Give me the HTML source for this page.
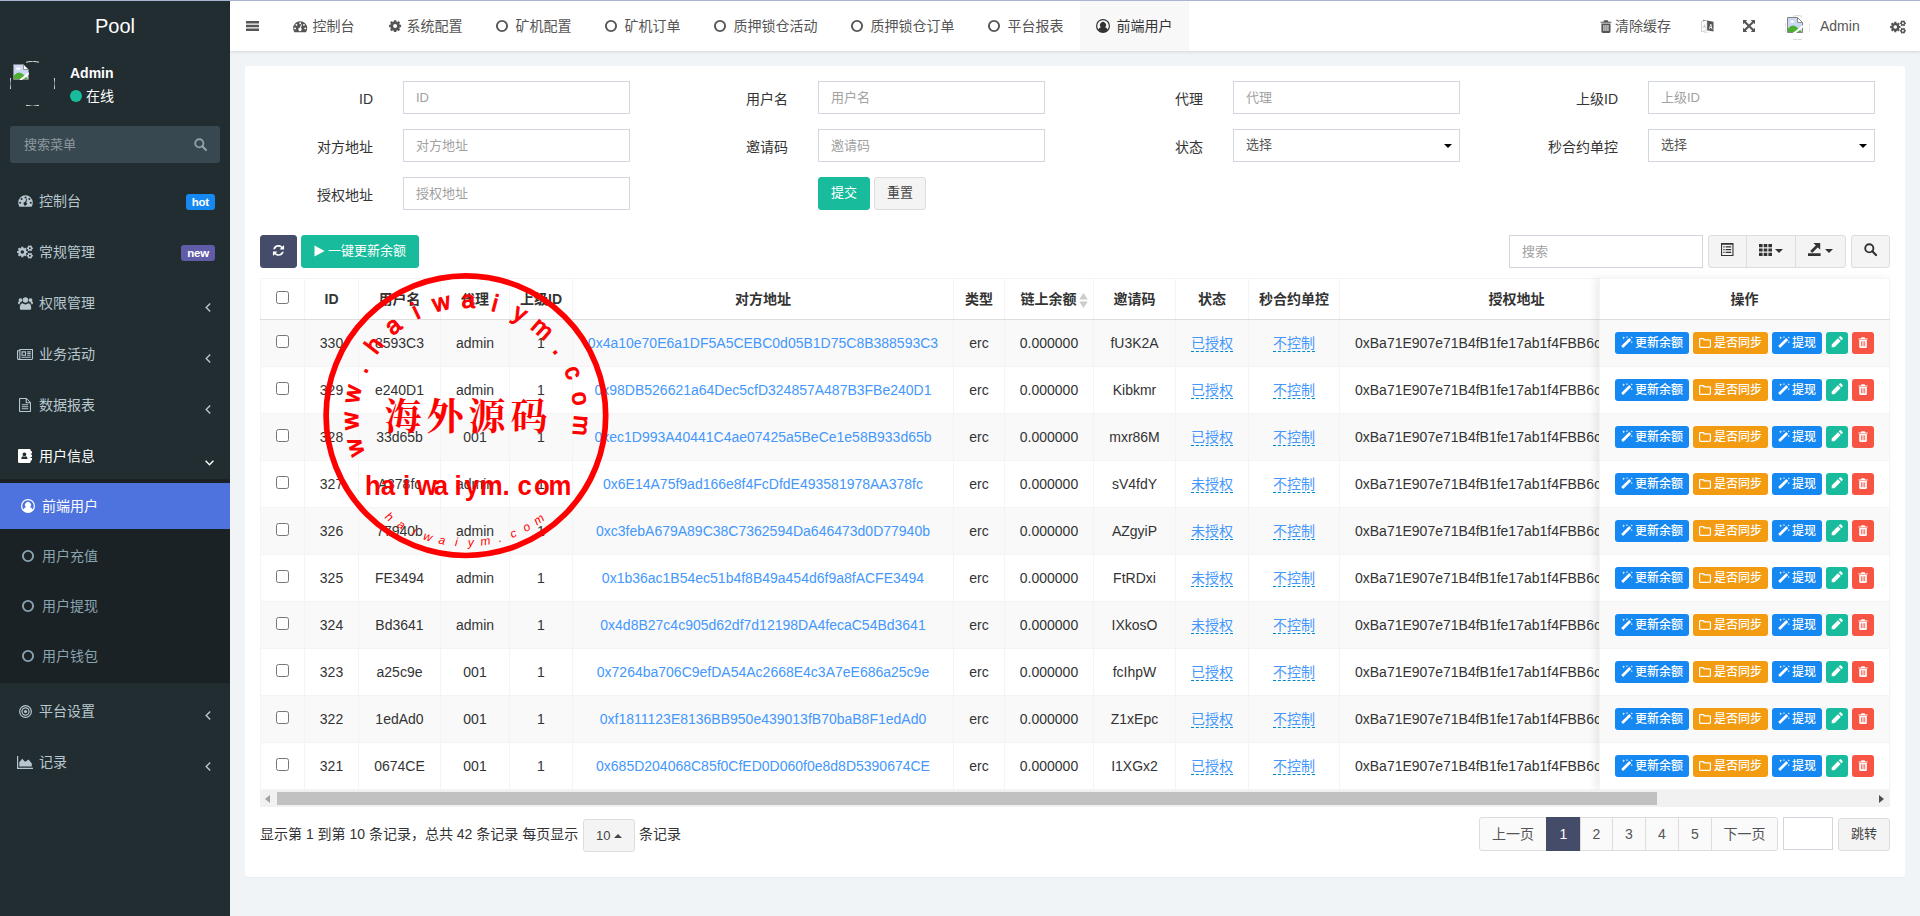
<!DOCTYPE html>
<html lang="zh-CN"><head><meta charset="utf-8"><title>Pool</title>
<style>
*{box-sizing:border-box;}
html,body{margin:0;padding:0;}
body{width:1920px;height:916px;overflow:hidden;background:#f1f4f6;font-family:"Liberation Sans","Noto Sans CJK SC",sans-serif;font-size:14px;line-height:20px;color:#333;position:relative;}
svg.ic{display:inline-block;vertical-align:middle;overflow:visible;}
a{text-decoration:none;color:inherit;}
.topline{position:absolute;left:0;top:0;width:1920px;height:1px;background:#a9b4d2;z-index:50;}
/* sidebar */
.sidebar{position:absolute;left:0;top:0;width:230px;height:916px;background:#222d32;color:#b8c7ce;}
.logo{position:absolute;left:0;top:1px;width:230px;height:50px;line-height:50px;text-align:center;color:#fff;font-size:20px;}
.upanel{position:absolute;left:0;top:51px;width:230px;height:65px;}
.avatar{position:absolute;left:10px;top:10px;width:45px;height:45px;}
.uname{position:absolute;left:70px;top:12px;color:#fff;font-weight:bold;font-size:14px;line-height:20px;}
.ustat{position:absolute;left:70px;top:35px;color:#fff;font-size:14px;line-height:20px;}
.ustat i{display:inline-block;width:12px;height:12px;border-radius:50%;background:#18bc9c;vertical-align:-1px;margin-right:4px;}
.sform{position:absolute;left:10px;top:126px;width:210px;height:37px;border-radius:3px;background:#374850;color:#8d989e;font-size:13px;line-height:37px;padding-left:14px;}
.sform svg{position:absolute;left:184px;top:12px;color:#93a0a6;}
ul.menu{position:absolute;left:0;top:173px;width:230px;margin:0;padding:0;list-style:none;}
ul.menu>li{margin:5px 0 0 0;padding:0;position:relative;}
ul.menu>li>a{display:block;height:46px;padding:13px 5px 13px 15px;line-height:20px;color:#b8c7ce;position:relative;white-space:nowrap;}
ul.menu>li>a .mi{display:inline-block;width:24px;text-align:center;margin-left:0;height:20px;line-height:18px;vertical-align:top;position:relative;left:-2px;}
ul.menu>li.open>a{color:#fff;}
.badge{position:absolute;right:15px;top:16px;height:16px;line-height:16px;border-radius:3px;color:#fff;font-weight:bold;font-size:11.5px;padding:0 6px;letter-spacing:-0.2px;}
.chev{position:absolute;right:19px;top:23px;line-height:0;}
ul.sub{list-style:none;margin:0;padding:4px 0 4px 0;background:#1a2226;}
ul.sub li{margin:0;padding:0;}
ul.sub li+li{margin-top:4px;}
ul.sub li a{display:block;height:46px;padding:13px 5px 13px 21px;line-height:20px;color:#8aa4af;white-space:nowrap;}
ul.sub li a .mi{display:inline-block;width:21px;height:20px;line-height:18px;vertical-align:top;}
ul.sub li.act a{background:#4e73df;color:#fff;}
/* header */
.header{position:absolute;left:230px;top:1px;width:1690px;height:50px;background:#fff;box-shadow:0 1px 3px rgba(0,0,0,.12);color:#555;}
.hamb{position:absolute;left:16px;top:20px;line-height:0;color:#555;}
.tabs{position:absolute;left:46.500px;top:0;height:50px;white-space:nowrap;}
.tab{display:inline-block;height:50px;line-height:50px;padding:0 16px;color:#555;vertical-align:top;}
.tab .ti{display:inline-block;width:20px;text-align:left;line-height:0;vertical-align:middle;position:relative;top:-1px;}
.tab.act{background:#f8f8f9;color:#333;}
.hr{position:absolute;top:0;height:50px;line-height:50px;color:#555;white-space:nowrap;}
/* content */
.panel{position:absolute;left:245px;top:66px;width:1660px;height:811px;background:#fff;border-radius:3px;box-shadow:0 1px 1px rgba(0,0,0,.03);}
.fg{position:absolute;height:33px;}
.fg label{position:absolute;right:100%;margin-right:30px;top:8px;line-height:20px;white-space:nowrap;color:#333;font-weight:normal;}
.fg .inp{position:absolute;left:0;top:0;width:227px;height:33px;border:1px solid #d2d6de;background:#fff;padding:5px 12px;line-height:21px;color:#a2a2a2;font-size:13px;}
.fg .sel{color:#555;line-height:19px;}
.fg .sel svg{position:absolute;right:7px;top:14px;color:#000;}
.btn{position:absolute;height:33px;line-height:30px;border:1px solid transparent;border-radius:3px;text-align:center;font-size:13px;white-space:nowrap;}
.b-suc{background:#18bc9c;border-color:#18bc9c;color:#fff;}
.b-def{background:#f4f4f4;border-color:#ddd;color:#444;}
.b-pri{background:#444c69;border-color:#444c69;color:#fff;}
/* table */
.twrap{position:absolute;left:260px;top:278px;width:1630px;height:512px;overflow:hidden;}
table{border-collapse:collapse;table-layout:fixed;font-size:14px;}
table.main{width:1920px;}
th,td{border:1px solid #f4f4f4;text-align:center;padding:0 8px;white-space:nowrap;overflow:hidden;vertical-align:middle;}
th{height:41px;font-weight:bold;color:#333;border-bottom:1px solid #ddd;background:#fff;}
td{height:47px;color:#333;}
tr.odd td{background:#f9f9f9;}
tr.even td{background:#fff;}
td a.lnk{color:#4397fd;}
td a.ed{color:#4397fd;border-bottom:1px dashed #08c;padding-bottom:0px;line-height:16px;display:inline-block;}
.cb{display:inline-block;width:13px;height:13px;border:1px solid #767676;border-radius:2.5px;background:#fff;vertical-align:middle;position:relative;top:-3px;}
.fixr{position:absolute;left:1599px;top:278px;width:291px;height:512px;background:#fff;box-shadow:-4px 0 8px rgba(0,0,0,.075);overflow:hidden;}
.fixr table{width:291px;}
.xb{display:inline-block;height:22px;line-height:20px;border:1px solid transparent;border-radius:3px;color:#fff;font-size:12px;font-weight:500;padding:0 5px;vertical-align:middle;margin-right:4px;white-space:nowrap;}
.xb svg{vertical-align:-1px;margin-right:2px;}
.xb.x-warn svg{margin-right:3px;}
.xb.ico{padding:0;width:22px;text-align:center;}
.xb.ico svg{margin:0;}
.x-info{background:#1688f1;}
.x-warn{background:#f39c12;}
.x-suc{background:#18bc9c;}
.x-dan{background:#f75444;}
.sbar{position:absolute;left:260px;top:790px;width:1630px;height:17px;background:#f1f1f1;}
.sbar .thumb{position:absolute;left:17px;top:2px;width:1380px;height:13px;background:#c1c1c1;}
.pinfo{position:absolute;left:260px;top:824px;line-height:20px;color:#333;white-space:nowrap;}
.pg{position:absolute;top:817px;height:34px;line-height:32px;border:1px solid #ddd;background:#fafafa;color:#555;text-align:center;}
</style></head>
<body>
<div class="sidebar">
<div class="logo">Pool</div>
<div class="upanel"><div class="avatar"><svg width="45" height="45" viewBox="0 0 45 45" style="position:absolute;left:0;top:0"><g fill="none" stroke="#d8dcde" stroke-width="1"><path d="M16 1.200a22 22 0 0 1 13 0"/><path d="M16 44.300a22 22 0 0 0 13 0"/><path d="M0.600 17a22 22 0 0 0 0 11"/><path d="M44.400 17a22 22 0 0 1 0 11"/></g></svg><span style="position:absolute;left:2.500px;top:3px;line-height:0"><svg class="ic" width="16" height="16" viewBox="0 0 16 16" style=""><path fill="#c9d7f2" d="M1 1h9.500l4.500 4.500v9.500h-14z"/><ellipse cx="5.300" cy="4.600" rx="2.300" ry="1.200" fill="#fff"/><path fill="#4caf2f" d="M1 15v-3.500q3.500-4.300 7-2.500q3.500 1.800 7 6z"/><path fill="#fff" d="M5.800 16L16 7.800v2.700L9.300 16z"/><path fill="none" stroke="#858585" stroke-width="1" d="M6.300 15.500h-5.800v-15h10l5 5v3M15.500 10.800v4.700h-5.800"/><path fill="#fff" stroke="#858585" stroke-width="0.900" d="M10.500 0.500v5h5z"/></svg></span></div><div class="uname">Admin</div><div class="ustat"><i></i>在线</div></div>
<div class="sform">搜索菜单<svg class="ic" width="13" height="13" viewBox="0 0 13 13" style=""><circle cx="5.3" cy="5.300" r="4.100" fill="none" stroke="currentColor" stroke-width="1.900"/><path d="M8.300 8.300L12 12" stroke="currentColor" stroke-width="2.200" stroke-linecap="round"/></svg></div>
<ul class="menu">
<li class=""><a><span class="mi"><svg class="ic" width="15" height="12.0" viewBox="0 0 15 12" style=""><path fill="currentColor" fill-rule="evenodd" d="M7.5 0.3A7.3 7.3 0 0 0 0.2 7.6c0 1.4 0.4 2.8 1.1 3.9c0.1 0.2 0.3 0.3 0.5 0.3h11.4c0.2 0 0.4-0.1 0.5-0.3a7.3 7.3 0 0 0 1.100-3.900A7.3 7.3 0 0 0 7.500 0.300zM7.5 1.400a1 1 0 1 1 0 2a1 1 0 0 1 0-2zM3.600 3a1 1 0 1 1 0 2a1 1 0 0 1 0-2zM11.400 3a1 1 0 1 1 0 2a1 1 0 0 1 0-2zM2.200 6.700a1 1 0 1 1 0 2a1 1 0 0 1 0-2zM12.800 6.700a1 1 0 1 1 0 2a1 1 0 0 1 0-2zM8.600 3.400l0.700 0.200l-1 3.800a1.700 1.700 0 1 1-1.200-0.300z"/></svg></span>控制台<span class="badge" style="background:#1688f1">hot</span></a></li>
<li class=""><a><span class="mi"><svg class="ic" width="16" height="14.0" viewBox="0 0 16 14" style=""><path fill="currentColor" fill-rule="evenodd" d="M9.25 5.92L10.49 5.93L10.49 8.07L9.25 8.08L8.86 9.03L9.73 9.91L8.21 11.43L7.33 10.56L6.38 10.95L6.37 12.19L4.23 12.19L4.22 10.95L3.27 10.56L2.39 11.43L0.87 9.91L1.74 9.03L1.35 8.08L0.11 8.07L0.11 5.93L1.35 5.92L1.74 4.97L0.87 4.09L2.39 2.57L3.27 3.44L4.22 3.05L4.23 1.81L6.37 1.81L6.38 3.05L7.33 3.44L8.21 2.57L9.73 4.09L8.86 4.97ZM3.50 7.00a1.80 1.80 0 1 0 3.60 0a1.80 1.80 0 1 0 -3.60 0z M15.06 2.50L15.89 2.47L15.89 4.13L15.06 4.10L14.67 4.77L15.11 5.47L13.67 6.30L13.28 5.57L12.52 5.57L12.13 6.30L10.69 5.47L11.13 4.77L10.74 4.10L9.91 4.13L9.91 2.47L10.74 2.50L11.13 1.83L10.69 1.13L12.13 0.30L12.52 1.03L13.28 1.03L13.67 0.30L15.11 1.13L14.67 1.83ZM11.90 3.30a1.00 1.00 0 1 0 2.00 0a1.00 1.00 0 1 0 -2.00 0z M15.06 9.90L15.89 9.87L15.89 11.53L15.06 11.50L14.67 12.17L15.11 12.87L13.67 13.70L13.28 12.97L12.52 12.97L12.13 13.70L10.69 12.87L11.13 12.17L10.74 11.50L9.91 11.53L9.91 9.87L10.74 9.90L11.13 9.23L10.69 8.53L12.13 7.70L12.52 8.43L13.28 8.43L13.67 7.70L15.11 8.53L14.67 9.23ZM11.90 10.70a1.00 1.00 0 1 0 2.00 0a1.00 1.00 0 1 0 -2.00 0z"/></svg></span>常规管理<span class="badge" style="background:#605ca8">new</span></a></li>
<li class=""><a><span class="mi"><svg class="ic" width="15" height="13" viewBox="0 0 15 13" style=""><path fill="currentColor" d="M7.500 0.300a2.700 2.700 0 1 1 0 5.400a2.700 2.700 0 0 1 0-5.400zM2.500 1.200a1.900 1.900 0 1 1 0 3.800a1.900 1.900 0 0 1 0-3.800zM12.500 1.200a1.900 1.900 0 1 1 0 3.800a1.900 1.900 0 0 1 0-3.800zM3.300 12.800c-0.900 0-1.500-0.500-1.500-1.400c0-2.800 0.900-5.100 2.600-5.100c0.400 0 1.500 1.200 3.100 1.200s2.700-1.200 3.100-1.200c1.700 0 2.600 2.300 2.600 5.100c0 0.900-0.600 1.400-1.500 1.400zM1.400 7.400c-1-0.100-1.400-0.500-1.400-1.300c0-0.700 0.200-1.600 0.900-1.600c0.200 0 0.800 0.600 1.600 0.600c0.400 0 0.800-0.100 1.100-0.300c-1.200 0.300-1.900 1.200-2.200 2.600zM13.600 7.400c1-0.100 1.400-0.500 1.400-1.300c0-0.700-0.200-1.600-0.900-1.600c-0.200 0-0.800 0.600-1.600 0.600c-0.400 0-0.800-0.100-1.100-0.300c1.200 0.300 1.900 1.200 2.200 2.600z"/></svg></span>权限管理<span class="chev"><svg class="ic" width="6" height="9" viewBox="0 0 6 9" style=""><path fill="none" stroke="currentColor" stroke-width="1.4" d="M5.200 0.600L1.200 4.500L5.200 8.400"/></svg></span></a></li>
<li class=""><a><span class="mi"><svg class="ic" width="16" height="11" viewBox="0 0 16 11" style=""><path fill="currentColor" fill-rule="evenodd" d="M2.300 0h13.700v9.600c0 0.800-0.600 1.400-1.400 1.400h-13.200c-0.800 0-1.400-0.600-1.400-1.400v-8.400h2.300zM3.400 1.100v8.400c0 0.200-0.100 0.300-0.200 0.400h11.400c0.200 0 0.300-0.100 0.300-0.300v-8.500zM1.100 2.300v7.200c0 0.300 0.300 0.500 0.600 0.500s0.600-0.200 0.600-0.500v-7.200zM4.500 2.300h4.600v4.500h-4.600zM5.600 3.400v2.300h2.400v-2.300zM10.200 2.300h3.500v1.100h-3.500zM10.200 4h3.500v1.100h-3.500zM10.200 5.700h3.500v1.100h-3.500zM4.500 7.700h9.200v1.100h-9.200z"/></svg></span>业务活动<span class="chev"><svg class="ic" width="6" height="9" viewBox="0 0 6 9" style=""><path fill="none" stroke="currentColor" stroke-width="1.4" d="M5.200 0.600L1.200 4.500L5.200 8.400"/></svg></span></a></li>
<li class=""><a><span class="mi"><svg class="ic" width="12" height="14" viewBox="0 0 12 14" style=""><path fill="currentColor" fill-rule="evenodd" d="M0.800 0h6.700l4.500 4.500v8.700c0 0.500-0.400 0.800-0.800 0.800h-10.400c-0.500 0-0.800-0.400-0.800-0.800v-12.400c0-0.500 0.400-0.800 0.800-0.800zM1.100 1.100v11.800h9.800v-7.600h-4.200v-4.200zM7.800 1.400v2.800h2.800zM2.800 6.300h6.400v1h-6.400zM2.800 8.300h6.400v1h-6.400zM2.800 10.300h6.400v1h-6.400z"/></svg></span>数据报表<span class="chev"><svg class="ic" width="6" height="9" viewBox="0 0 6 9" style=""><path fill="none" stroke="currentColor" stroke-width="1.4" d="M5.200 0.600L1.200 4.500L5.200 8.400"/></svg></span></a></li>
<li class="open"><a><span class="mi"><svg class="ic" width="14" height="14" viewBox="0 0 14 14" style=""><path fill="currentColor" fill-rule="evenodd" d="M1.200 0h10.300c0.700 0 1.200 0.500 1.200 1.200v1h0.900c0.200 0 0.400 0.200 0.400 0.400v1.600c0 0.200-0.200 0.400-0.400 0.400h-0.900v1h0.900c0.200 0 0.400 0.200 0.400 0.400v1.600c0 0.200-0.200 0.400-0.400 0.400h-0.900v1h0.900c0.200 0 0.400 0.200 0.400 0.400v1.600c0 0.200-0.200 0.400-0.400 0.400h-0.900v1.400c0 0.700-0.500 1.200-1.200 1.200h-10.300c-0.700 0-1.200-0.500-1.200-1.200v-11.600c0-0.700 0.500-1.200 1.200-1.200zM6.400 3.400a1.900 1.900 0 1 0 0 3.800a1.900 1.900 0 0 0 0-3.800zM3.300 10.100h6.200c0-1.500-0.600-2.900-1.600-2.900c-0.300 0-0.700 0.500-1.500 0.500s-1.200-0.500-1.500-0.500c-1 0-1.600 1.400-1.600 2.900z"/></svg></span>用户信息<span class="chev" style="right:16px;top:27px"><svg class="ic" width="9" height="6" viewBox="0 0 9 6" style=""><path fill="none" stroke="currentColor" stroke-width="1.4" d="M0.600 0.800L4.500 4.800L8.400 0.800"/></svg></span></a><ul class="sub"><li class="act"><a><span class="mi"><svg class="ic" width="14" height="14" viewBox="0 0 14 14" style=""><path fill="currentColor" fill-rule="evenodd" d="M7 0a7 7 0 1 0 0 14a7 7 0 0 0 0-14zM7 1.3a5.700 5.700 0 0 1 4.500 9.200c-0.400-1.200-1.300-2-2.500-2.300a3 3 0 1 0-4 0c-1.200 0.300-2.100 1.100-2.500 2.300a5.700 5.700 0 0 1 4.500-9.200z"/></svg></span>前端用户</a></li><li><a><span class="mi"><svg class="ic" width="14" height="14" viewBox="0 0 14 14" style=""><circle cx="7" cy="7" r="5.1" fill="none" stroke="currentColor" stroke-width="1.9"/></svg></span>用户充值</a></li><li><a><span class="mi"><svg class="ic" width="14" height="14" viewBox="0 0 14 14" style=""><circle cx="7" cy="7" r="5.1" fill="none" stroke="currentColor" stroke-width="1.9"/></svg></span>用户提现</a></li><li><a><span class="mi"><svg class="ic" width="14" height="14" viewBox="0 0 14 14" style=""><circle cx="7" cy="7" r="5.1" fill="none" stroke="currentColor" stroke-width="1.9"/></svg></span>用户钱包</a></li></ul></li>
<li class=""><a><span class="mi"><svg class="ic" width="13" height="13" viewBox="0 0 14 14" style=""><circle cx="7" cy="7" r="6.300" fill="none" stroke="currentColor" stroke-width="1.300"/><circle cx="7" cy="7" r="3.800" fill="none" stroke="currentColor" stroke-width="1.300"/><circle cx="7" cy="7" r="1.700" fill="currentColor"/></svg></span>平台设置<span class="chev"><svg class="ic" width="6" height="9" viewBox="0 0 6 9" style=""><path fill="none" stroke="currentColor" stroke-width="1.4" d="M5.200 0.600L1.200 4.500L5.200 8.400"/></svg></span></a></li>
<li class=""><a><span class="mi"><svg class="ic" width="16" height="13" viewBox="0 0 16 13" style=""><path fill="currentColor" d="M0 0h1.200v11.800h14.800v1.200h-16zM2.300 10.600v-4.300l2.900-3.500l2.900 2.900l3.500-2.300l3.200 4.100v3.100z"/></svg></span>记录<span class="chev"><svg class="ic" width="6" height="9" viewBox="0 0 6 9" style=""><path fill="none" stroke="currentColor" stroke-width="1.4" d="M5.200 0.600L1.200 4.500L5.200 8.400"/></svg></span></a></li>
</ul>
</div>
<div class="header">
<span class="hamb"><svg class="ic" width="13" height="10" viewBox="0 0 13 10" style=""><path fill="currentColor" d="M0 0h13v2.400h-13zM0 3.800h13v2.400h-13zM0 7.600h13v2.400h-13z"/></svg></span>
<div class="tabs"><a class="tab"><span class="ti" style="width:20px;padding-left:0px"><svg class="ic" width="14.4" height="11.520000000000001" viewBox="0 0 15 12" style=""><path fill="currentColor" fill-rule="evenodd" d="M7.5 0.3A7.3 7.3 0 0 0 0.2 7.6c0 1.4 0.4 2.8 1.1 3.9c0.1 0.2 0.3 0.3 0.5 0.3h11.4c0.2 0 0.4-0.1 0.5-0.3a7.3 7.3 0 0 0 1.100-3.900A7.3 7.3 0 0 0 7.500 0.300zM7.5 1.400a1 1 0 1 1 0 2a1 1 0 0 1 0-2zM3.600 3a1 1 0 1 1 0 2a1 1 0 0 1 0-2zM11.400 3a1 1 0 1 1 0 2a1 1 0 0 1 0-2zM2.200 6.700a1 1 0 1 1 0 2a1 1 0 0 1 0-2zM12.800 6.700a1 1 0 1 1 0 2a1 1 0 0 1 0-2zM8.600 3.400l0.700 0.200l-1 3.800a1.700 1.700 0 1 1-1.200-0.300z"/></svg></span>控制台</a><a class="tab"><span class="ti" style="width:20px;padding-left:2px"><svg class="ic" width="12.2" height="12.2" viewBox="0 0 14 14" style=""><path fill="currentColor" fill-rule="evenodd" d="M12.31 5.55L13.85 5.58L13.85 8.42L12.31 8.45L11.78 9.73L12.85 10.84L10.84 12.85L9.73 11.78L8.45 12.31L8.42 13.85L5.58 13.85L5.55 12.31L4.27 11.78L3.16 12.85L1.15 10.84L2.22 9.73L1.69 8.45L0.15 8.42L0.15 5.58L1.69 5.55L2.22 4.27L1.15 3.16L3.16 1.15L4.27 2.22L5.55 1.69L5.58 0.15L8.42 0.15L8.45 1.69L9.73 2.22L10.84 1.15L12.85 3.16L11.78 4.27ZM4.70 7.00a2.30 2.30 0 1 0 4.60 0a2.30 2.30 0 1 0 -4.60 0z"/></svg></span>系统配置</a><a class="tab"><span class="ti" style="width:21px;padding-left:0.7px"><svg class="ic" width="14" height="14" viewBox="0 0 14 14" style=""><circle cx="7" cy="7" r="5.1" fill="none" stroke="currentColor" stroke-width="1.9"/></svg></span>矿机配置</a><a class="tab"><span class="ti" style="width:21px;padding-left:0.7px"><svg class="ic" width="14" height="14" viewBox="0 0 14 14" style=""><circle cx="7" cy="7" r="5.1" fill="none" stroke="currentColor" stroke-width="1.9"/></svg></span>矿机订单</a><a class="tab"><span class="ti" style="width:21px;padding-left:0.7px"><svg class="ic" width="14" height="14" viewBox="0 0 14 14" style=""><circle cx="7" cy="7" r="5.1" fill="none" stroke="currentColor" stroke-width="1.9"/></svg></span>质押锁仓活动</a><a class="tab"><span class="ti" style="width:21px;padding-left:0.7px"><svg class="ic" width="14" height="14" viewBox="0 0 14 14" style=""><circle cx="7" cy="7" r="5.1" fill="none" stroke="currentColor" stroke-width="1.9"/></svg></span>质押锁仓订单</a><a class="tab"><span class="ti" style="width:21px;padding-left:0.7px"><svg class="ic" width="14" height="14" viewBox="0 0 14 14" style=""><circle cx="7" cy="7" r="5.1" fill="none" stroke="currentColor" stroke-width="1.9"/></svg></span>平台报表</a><a class="tab act"><span class="ti" style="width:21px;padding-left:0.5px"><svg class="ic" width="14" height="14" viewBox="0 0 14 14" style=""><path fill="currentColor" fill-rule="evenodd" d="M7 0a7 7 0 1 0 0 14a7 7 0 0 0 0-14zM7 1.3a5.700 5.700 0 0 1 4.500 9.200c-0.400-1.200-1.300-2-2.500-2.300a3 3 0 1 0-4 0c-1.200 0.300-2.100 1.100-2.500 2.300a5.700 5.700 0 0 1 4.500-9.200z"/></svg></span>前端用户</a></div>
<div class="hr" style="left:1371px"><span style="display:inline-block;width:14px;line-height:0;vertical-align:middle;position:relative;top:-1px;left:-1px"><svg class="ic" width="11.916666666666666" height="13" viewBox="0 0 11 12" style=""><path fill="currentColor" fill-rule="evenodd" d="M3.800 0.200h3.400l0.600 1.300h2.700v1.100h-10v-1.100h2.700zM1.300 3.200h8.400v7.500c0 0.700-0.500 1.200-1.200 1.200h-6c-0.700 0-1.200-0.500-1.200-1.200zM3.200 4.600v5.600h0.900v-5.600zM5.050 4.600v5.600h0.900v-5.600zM6.900 4.600v5.600h0.900v-5.600z"/></svg></span>清除缓存</div>
<div class="hr" style="left:1471px;line-height:0;top:18px;height:auto"><svg class="ic" width="13" height="14" viewBox="0 0 13 14" style=""><path fill="#fff" stroke="#c4c4c4" stroke-width="0.800" d="M0.500 2.500l5.500-1.300v10.300l-5.500 1.300z"/><path fill="#c4c4c4" d="M2 9.300l1-3.800h0.800l1 3.800h-0.700l-0.200-0.900h-1l-0.200 0.900z"/><path fill="currentColor" d="M6.200 1.600l6.300 1.200v9.700l-6.300-1.200z"/><path fill="#fff" d="M8 10l1.300-5h0.900l1.300 5.400l-0.800-0.150l-0.300-1.200l-1.400-0.250l-0.300 1.100zM9.200 7.900l1 0.200l-0.500-2z"/><path fill="currentColor" d="M2 0.800l3 1h-3z"/><path fill="#ccc" d="M3 13.300h4.500v0.500h-4.500z"/></svg></div>
<div class="hr" style="left:1513px;line-height:0;top:19px;height:auto"><svg class="ic" width="12" height="12" viewBox="0 0 12 12" style=""><path fill="currentColor" d="M0 0h4.300l-1.400 1.400l3.100 3.100l3.100-3.100l-1.400-1.400h4.300v4.300l-1.400-1.400l-3.100 3.100l3.100 3.100l1.400-1.400v4.300h-4.300l1.400-1.400l-3.100-3.100l-3.100 3.100l1.400 1.400h-4.300v-4.300l1.400 1.400l3.100-3.100l-3.100-3.100l-1.400 1.400z"/></svg></div>
<div class="hr" style="left:1555px;line-height:0;top:14px;height:auto"><svg width="25" height="25" viewBox="0 0 25 25" style="position:absolute;left:0;top:0"><g fill="none" stroke="#d4d4d4" stroke-width="1"><path d="M8 1.300a12.300 12.300 0 0 1 9 0"/><path d="M8 24.100a12.300 12.300 0 0 0 9 0"/><path d="M24.600 8.500a12.300 12.300 0 0 1 0 8"/><path d="M0.400 8.500a12.300 12.300 0 0 0 0 8"/></g></svg><span style="position:absolute;left:2px;top:2px"><svg class="ic" width="16" height="16" viewBox="0 0 16 16" style=""><path fill="#c9d7f2" d="M1 1h9.500l4.500 4.500v9.500h-14z"/><ellipse cx="5.300" cy="4.600" rx="2.300" ry="1.200" fill="#fff"/><path fill="#4caf2f" d="M1 15v-3.500q3.500-4.300 7-2.500q3.500 1.800 7 6z"/><path fill="#fff" d="M5.800 16L16 7.800v2.700L9.300 16z"/><path fill="none" stroke="#858585" stroke-width="1" d="M6.300 15.500h-5.800v-15h10l5 5v3M15.500 10.800v4.700h-5.800"/><path fill="#fff" stroke="#858585" stroke-width="0.900" d="M10.500 0.500v5h5z"/></svg></span></div>
<div class="hr" style="left:1590px">Admin</div>
<div class="hr" style="left:1660px;line-height:0;top:19px;height:auto"><svg class="ic" width="16" height="14.0" viewBox="0 0 16 14" style=""><path fill="currentColor" fill-rule="evenodd" d="M9.25 5.92L10.49 5.93L10.49 8.07L9.25 8.08L8.86 9.03L9.73 9.91L8.21 11.43L7.33 10.56L6.38 10.95L6.37 12.19L4.23 12.19L4.22 10.95L3.27 10.56L2.39 11.43L0.87 9.91L1.74 9.03L1.35 8.08L0.11 8.07L0.11 5.93L1.35 5.92L1.74 4.97L0.87 4.09L2.39 2.57L3.27 3.44L4.22 3.05L4.23 1.81L6.37 1.81L6.38 3.05L7.33 3.44L8.21 2.57L9.73 4.09L8.86 4.97ZM3.50 7.00a1.80 1.80 0 1 0 3.60 0a1.80 1.80 0 1 0 -3.60 0z M15.06 2.50L15.89 2.47L15.89 4.13L15.06 4.10L14.67 4.77L15.11 5.47L13.67 6.30L13.28 5.57L12.52 5.57L12.13 6.30L10.69 5.47L11.13 4.77L10.74 4.10L9.91 4.13L9.91 2.47L10.74 2.50L11.13 1.83L10.69 1.13L12.13 0.30L12.52 1.03L13.28 1.03L13.67 0.30L15.11 1.13L14.67 1.83ZM11.90 3.30a1.00 1.00 0 1 0 2.00 0a1.00 1.00 0 1 0 -2.00 0z M15.06 9.90L15.89 9.87L15.89 11.53L15.06 11.50L14.67 12.17L15.11 12.87L13.67 13.70L13.28 12.97L12.52 12.97L12.13 13.70L10.69 12.87L11.13 12.17L10.74 11.50L9.91 11.53L9.91 9.87L10.74 9.90L11.13 9.23L10.69 8.53L12.13 7.70L12.52 8.43L13.28 8.43L13.67 7.70L15.11 8.53L14.67 9.23ZM11.90 10.70a1.00 1.00 0 1 0 2.00 0a1.00 1.00 0 1 0 -2.00 0z"/></svg></div>
</div>
<div class="panel"></div>
<div class="fg" style="left:403px;top:81px"><label>ID</label><div class="inp">ID</div></div>
<div class="fg" style="left:818px;top:81px"><label>用户名</label><div class="inp">用户名</div></div>
<div class="fg" style="left:1233px;top:81px"><label>代理</label><div class="inp">代理</div></div>
<div class="fg" style="left:1648px;top:81px"><label>上级ID</label><div class="inp">上级ID</div></div>
<div class="fg" style="left:403px;top:129px"><label>对方地址</label><div class="inp">对方地址</div></div>
<div class="fg" style="left:818px;top:129px"><label>邀请码</label><div class="inp">邀请码</div></div>
<div class="fg" style="left:1233px;top:129px"><label>状态</label><div class="inp sel">选择<svg class="ic" width="8" height="4" viewBox="0 0 8 4" style=""><path fill="currentColor" d="M0 0h8l-4 4z"/></svg></div></div>
<div class="fg" style="left:1648px;top:129px"><label>秒合约单控</label><div class="inp sel">选择<svg class="ic" width="8" height="4" viewBox="0 0 8 4" style=""><path fill="currentColor" d="M0 0h8l-4 4z"/></svg></div></div>
<div class="fg" style="left:403px;top:177px"><label>授权地址</label><div class="inp">授权地址</div></div>
<div class="btn b-suc" style="left:818px;top:177px;width:52px">提交</div>
<div class="btn b-def" style="left:874px;top:177px;width:52px">重置</div>
<div class="btn b-pri" style="left:260px;top:235px;width:37px"><span style="line-height:0;position:relative;top:-1px"><svg class="ic" width="13" height="13" viewBox="0 0 14 14" style=""><path fill="currentColor" d="M7 1.200c1.600 0 3 0.600 4.100 1.700l1.200-1.200c0.300-0.300 0.700-0.100 0.700 0.300v4h-4c-0.400 0-0.600-0.400-0.300-0.700l1.200-1.200a4.100 4.100 0 0 0-6.700 1.600h-1.900a5.900 5.900 0 0 1 5.700-4.500zM1 8h4c0.400 0 0.600 0.400 0.300 0.700l-1.200 1.200a4.100 4.100 0 0 0 6.700-1.600h1.900a5.900 5.900 0 0 1-9.800 2.800l-1.200 1.200c-0.300 0.300-0.700 0.100-0.700-0.300z"/></svg></span></div>
<div class="btn b-suc" style="left:301px;top:235px;width:118px"><span style="line-height:0;position:relative;top:-1px;margin-right:3px"><svg class="ic" width="11" height="12" viewBox="0 0 11 12" style=""><path fill="currentColor" d="M0.500 0.400L10.600 6L0.500 11.600z"/></svg></span>一键更新余额</div>
<div class="fg" style="left:1509px;top:235px"><div class="inp" style="width:194px">搜索</div></div>
<div class="btn b-def" style="left:1708px;top:235px;width:39px;border-radius:3px 0 0 3px;color:#333"><span style="line-height:0;position:relative;top:-2px"><svg class="ic" width="12.5" height="13" viewBox="0 0 12.500 13" style=""><path fill="currentColor" fill-rule="evenodd" d="M0 0h12.500v13h-12.500zM1.100 1.800v10.100h10.300v-10.100zM2.300 3.300h1.300v1.300h-1.300zM4.600 3.300h5.600v1.300h-5.600zM2.300 6h1.300v1.300h-1.300zM4.600 6h5.600v1.300h-5.600zM2.300 8.700h1.300v1.300h-1.300zM4.600 8.700h5.600v1.300h-5.600z"/></svg></span></div>
<div class="btn b-def" style="left:1746px;top:235px;width:50px;border-radius:0;color:#333"><span style="line-height:0;position:relative;top:-2px"><svg class="ic" width="13" height="12" viewBox="0 0 13 12" style=""><path fill="currentColor" d="M0 0h3.600v3.200h-3.600zM4.700 0h3.600v3.200h-3.600zM9.400 0h3.600v3.200h-3.600zM0 4.400h3.600v3.200h-3.600zM4.700 4.400h3.600v3.200h-3.600zM9.400 4.400h3.600v3.200h-3.600zM0 8.800h3.600v3.200h-3.600zM4.700 8.800h3.600v3.200h-3.600zM9.400 8.800h3.600v3.200h-3.600z"/></svg></span> <span style="line-height:0;position:relative;top:-1px"><svg class="ic" width="8" height="4" viewBox="0 0 8 4" style=""><path fill="currentColor" d="M0 0h8l-4 4z"/></svg></span></div>
<div class="btn b-def" style="left:1795px;top:235px;width:51px;border-radius:0 3px 3px 0;color:#333"><span style="line-height:0;position:relative;top:-2px"><svg class="ic" width="13" height="13" viewBox="0 0 13 13" style=""><path fill="currentColor" d="M0 10.300h12.600v2.700h-12.600zM5.400 0h6.800v6.800z"/><path stroke="currentColor" stroke-width="2.700" fill="none" d="M9.700 2.500L3.400 8.800"/><path fill="currentColor" d="M2.600 7.400h2.200v2h-2.200z" opacity="0.550"/></svg></span> <span style="line-height:0;position:relative;top:-1px"><svg class="ic" width="8" height="4" viewBox="0 0 8 4" style=""><path fill="currentColor" d="M0 0h8l-4 4z"/></svg></span></div>
<div class="btn b-def" style="left:1851px;top:235px;width:39px;color:#333"><span style="line-height:0;position:relative;top:-2px"><svg class="ic" width="13" height="13" viewBox="0 0 13 13" style=""><circle cx="5.3" cy="5.300" r="4.100" fill="none" stroke="currentColor" stroke-width="1.900"/><path d="M8.300 8.300L12 12" stroke="currentColor" stroke-width="2.200" stroke-linecap="round"/></svg></span></div>
<div class="twrap"><table class="main" style="width:1723px"><colgroup><col style="width:44px"><col style="width:54px"><col style="width:82px"><col style="width:69px"><col style="width:63px"><col style="width:381px"><col style="width:51px"><col style="width:89px"><col style="width:82px"><col style="width:73px"><col style="width:91px"><col style="width:354px"><col style="width:290px"></colgroup>
<thead><tr><th><span class="cb"></span></th><th>ID</th><th>用户名</th><th>代理</th><th>上级ID</th><th>对方地址</th><th>类型</th><th style="padding:0 0 0 10px">链上余额<svg class="ic" width="9" height="15" viewBox="0 0 8 14" style="margin-left:2px;margin-top:1px"><path fill="#ccc" d="M0 6l4-6l4 6zM0 8l4 6l4-6z"/></svg></th><th>邀请码</th><th>状态</th><th>秒合约单控</th><th>授权地址</th><th>操作</th></tr></thead>
<tbody>
<tr class="odd"><td><span class="cb"></span></td><td>330</td><td>8593C3</td><td>admin</td><td>1</td><td><a class="lnk">0x4a10e70E6a1DF5A5CEBC0d05B1D75C8B388593C3</a></td><td>erc</td><td>0.000000</td><td>fU3K2A</td><td><a class="ed">已授权</a></td><td><a class="ed">不控制</a></td><td style="text-align:left;padding-left:15px">0xBa71E907e71B4fB1fe17ab1f4FBB6c5D2e9A07F3b1</td><td></td></tr>
<tr class="even"><td><span class="cb"></span></td><td>329</td><td>e240D1</td><td>admin</td><td>1</td><td><a class="lnk">0x98DB526621a64Dec5cfD324857A487B3FBe240D1</a></td><td>erc</td><td>0.000000</td><td>Kibkmr</td><td><a class="ed">已授权</a></td><td><a class="ed">不控制</a></td><td style="text-align:left;padding-left:15px">0xBa71E907e71B4fB1fe17ab1f4FBB6c5D2e9A07F3b1</td><td></td></tr>
<tr class="odd"><td><span class="cb"></span></td><td>328</td><td>33d65b</td><td>001</td><td>1</td><td><a class="lnk">0xec1D993A40441C4ae07425a5BeCe1e58B933d65b</a></td><td>erc</td><td>0.000000</td><td>mxr86M</td><td><a class="ed">已授权</a></td><td><a class="ed">不控制</a></td><td style="text-align:left;padding-left:15px">0xBa71E907e71B4fB1fe17ab1f4FBB6c5D2e9A07F3b1</td><td></td></tr>
<tr class="even"><td><span class="cb"></span></td><td>327</td><td>A378fc</td><td>admin</td><td>1</td><td><a class="lnk">0x6E14A75f9ad166e8f4FcDfdE493581978AA378fc</a></td><td>erc</td><td>0.000000</td><td>sV4fdY</td><td><a class="ed">未授权</a></td><td><a class="ed">不控制</a></td><td style="text-align:left;padding-left:15px">0xBa71E907e71B4fB1fe17ab1f4FBB6c5D2e9A07F3b1</td><td></td></tr>
<tr class="odd"><td><span class="cb"></span></td><td>326</td><td>77940b</td><td>admin</td><td>1</td><td><a class="lnk">0xc3febA679A89C38C7362594Da646473d0D77940b</a></td><td>erc</td><td>0.000000</td><td>AZgyiP</td><td><a class="ed">未授权</a></td><td><a class="ed">不控制</a></td><td style="text-align:left;padding-left:15px">0xBa71E907e71B4fB1fe17ab1f4FBB6c5D2e9A07F3b1</td><td></td></tr>
<tr class="even"><td><span class="cb"></span></td><td>325</td><td>FE3494</td><td>admin</td><td>1</td><td><a class="lnk">0x1b36ac1B54ec51b4f8B49a454d6f9a8fACFE3494</a></td><td>erc</td><td>0.000000</td><td>FtRDxi</td><td><a class="ed">未授权</a></td><td><a class="ed">不控制</a></td><td style="text-align:left;padding-left:15px">0xBa71E907e71B4fB1fe17ab1f4FBB6c5D2e9A07F3b1</td><td></td></tr>
<tr class="odd"><td><span class="cb"></span></td><td>324</td><td>Bd3641</td><td>admin</td><td>1</td><td><a class="lnk">0x4d8B27c4c905d62df7d12198DA4fecaC54Bd3641</a></td><td>erc</td><td>0.000000</td><td>IXkosO</td><td><a class="ed">未授权</a></td><td><a class="ed">不控制</a></td><td style="text-align:left;padding-left:15px">0xBa71E907e71B4fB1fe17ab1f4FBB6c5D2e9A07F3b1</td><td></td></tr>
<tr class="even"><td><span class="cb"></span></td><td>323</td><td>a25c9e</td><td>001</td><td>1</td><td><a class="lnk">0x7264ba706C9efDA54Ac2668E4c3A7eE686a25c9e</a></td><td>erc</td><td>0.000000</td><td>fcIhpW</td><td><a class="ed">已授权</a></td><td><a class="ed">不控制</a></td><td style="text-align:left;padding-left:15px">0xBa71E907e71B4fB1fe17ab1f4FBB6c5D2e9A07F3b1</td><td></td></tr>
<tr class="odd"><td><span class="cb"></span></td><td>322</td><td>1edAd0</td><td>001</td><td>1</td><td><a class="lnk">0xf1811123E8136BB950e439013fB70baB8F1edAd0</a></td><td>erc</td><td>0.000000</td><td>Z1xEpc</td><td><a class="ed">已授权</a></td><td><a class="ed">不控制</a></td><td style="text-align:left;padding-left:15px">0xBa71E907e71B4fB1fe17ab1f4FBB6c5D2e9A07F3b1</td><td></td></tr>
<tr class="even"><td><span class="cb"></span></td><td>321</td><td>0674CE</td><td>001</td><td>1</td><td><a class="lnk">0x685D204068C85f0CfED0D060f0e8d8D5390674CE</a></td><td>erc</td><td>0.000000</td><td>I1XGx2</td><td><a class="ed">已授权</a></td><td><a class="ed">不控制</a></td><td style="text-align:left;padding-left:15px">0xBa71E907e71B4fB1fe17ab1f4FBB6c5D2e9A07F3b1</td><td></td></tr>
</tbody></table></div>
<div class="fixr"><table><thead><tr><th>操作</th></tr></thead><tbody>
<tr class="odd"><td style="padding:0 0 0 15px;text-align:left"><a class="xb x-info"><svg class="ic" width="12" height="12" viewBox="0 0 12 12" style=""><path fill="currentColor" d="M8.300 2l1.900 1.900l-8.100 8.100l-1.900-1.900zM2.700 0.200l0.400 1.200l1.200 0.400l-1.200 0.400l-0.400 1.200l-0.400-1.200l-1.200-0.400l1.200-0.400zM6 0l0.300 0.800l0.800 0.300l-0.800 0.300l-0.300 0.800l-0.300-0.800l-0.800-0.300l0.800-0.300zM10.800 0.200l0.300 0.900l0.900 0.300l-0.900 0.300l-0.300 0.900l-0.300-0.900l-0.900-0.300l0.900-0.300zM10.800 4.900l0.300 0.900l0.900 0.300l-0.900 0.300l-0.300 0.900l-0.300-0.900l-0.900-0.300l0.900-0.300z"/></svg>更新余额</a><a class="xb x-warn"><svg class="ic" width="12" height="10" viewBox="0 0 12 10" style=""><path fill="none" stroke="currentColor" stroke-width="1.200" d="M0.600 1.400c0-0.400 0.300-0.800 0.800-0.800h2.800c0.400 0 0.800 0.400 0.800 0.800v0.500h5.600c0.400 0 0.800 0.400 0.800 0.800v5.900c0 0.400-0.400 0.800-0.800 0.800h-9.200c-0.400 0-0.800-0.400-0.800-0.800z"/></svg>是否同步</a><a class="xb x-info"><svg class="ic" width="12" height="12" viewBox="0 0 12 12" style=""><path fill="currentColor" d="M8.300 2l1.900 1.900l-8.100 8.100l-1.900-1.900zM2.700 0.200l0.400 1.200l1.200 0.400l-1.200 0.400l-0.400 1.200l-0.400-1.200l-1.200-0.400l1.200-0.400zM6 0l0.300 0.800l0.800 0.300l-0.800 0.300l-0.300 0.800l-0.300-0.800l-0.800-0.300l0.800-0.300zM10.800 0.200l0.300 0.900l0.900 0.300l-0.900 0.300l-0.300 0.900l-0.300-0.900l-0.900-0.300l0.900-0.300zM10.800 4.900l0.300 0.900l0.900 0.300l-0.900 0.300l-0.300 0.900l-0.300-0.900l-0.900-0.300l0.900-0.300z"/></svg>提现</a><a class="xb ico x-suc"><svg class="ic" width="12" height="12" viewBox="0 0 12 12" style=""><path fill="currentColor" d="M8.700 0.500c0.400-0.400 1-0.400 1.400 0l1.400 1.400c0.400 0.400 0.400 1 0 1.400l-1 1l-2.800-2.800zM6.900 2.300l2.800 2.800l-6.200 6.200h-2.800v-2.800z"/></svg></a><a class="xb ico x-dan" style="margin-right:0"><svg class="ic" width="10.083333333333334" height="11" viewBox="0 0 11 12" style=""><path fill="currentColor" fill-rule="evenodd" d="M3.800 0.200h3.400l0.600 1.300h2.700v1.100h-10v-1.100h2.700zM1.300 3.200h8.400v7.500c0 0.700-0.500 1.200-1.200 1.200h-6c-0.700 0-1.200-0.500-1.200-1.200zM3.200 4.600v5.600h0.900v-5.600zM5.050 4.600v5.600h0.900v-5.600zM6.900 4.600v5.600h0.900v-5.600z"/></svg></a></td></tr>
<tr class="even"><td style="padding:0 0 0 15px;text-align:left"><a class="xb x-info"><svg class="ic" width="12" height="12" viewBox="0 0 12 12" style=""><path fill="currentColor" d="M8.300 2l1.900 1.900l-8.100 8.100l-1.900-1.900zM2.700 0.200l0.400 1.200l1.200 0.400l-1.200 0.400l-0.400 1.200l-0.400-1.200l-1.200-0.400l1.200-0.400zM6 0l0.300 0.800l0.800 0.300l-0.800 0.300l-0.300 0.800l-0.300-0.800l-0.800-0.300l0.800-0.300zM10.800 0.200l0.300 0.900l0.900 0.300l-0.900 0.300l-0.300 0.900l-0.300-0.900l-0.900-0.300l0.900-0.300zM10.800 4.900l0.300 0.900l0.900 0.300l-0.900 0.300l-0.300 0.900l-0.300-0.900l-0.900-0.300l0.900-0.300z"/></svg>更新余额</a><a class="xb x-warn"><svg class="ic" width="12" height="10" viewBox="0 0 12 10" style=""><path fill="none" stroke="currentColor" stroke-width="1.200" d="M0.600 1.400c0-0.400 0.300-0.800 0.800-0.800h2.800c0.400 0 0.800 0.400 0.800 0.800v0.500h5.600c0.400 0 0.800 0.400 0.800 0.800v5.900c0 0.400-0.400 0.800-0.800 0.800h-9.200c-0.400 0-0.800-0.400-0.800-0.800z"/></svg>是否同步</a><a class="xb x-info"><svg class="ic" width="12" height="12" viewBox="0 0 12 12" style=""><path fill="currentColor" d="M8.300 2l1.900 1.900l-8.100 8.100l-1.900-1.900zM2.700 0.200l0.400 1.200l1.200 0.400l-1.200 0.400l-0.400 1.200l-0.400-1.200l-1.200-0.400l1.200-0.400zM6 0l0.300 0.800l0.800 0.300l-0.800 0.300l-0.300 0.800l-0.300-0.800l-0.800-0.300l0.800-0.300zM10.800 0.200l0.300 0.900l0.900 0.300l-0.900 0.300l-0.300 0.900l-0.300-0.900l-0.900-0.300l0.900-0.300zM10.800 4.900l0.300 0.900l0.900 0.300l-0.900 0.300l-0.300 0.900l-0.300-0.900l-0.900-0.300l0.900-0.300z"/></svg>提现</a><a class="xb ico x-suc"><svg class="ic" width="12" height="12" viewBox="0 0 12 12" style=""><path fill="currentColor" d="M8.700 0.500c0.400-0.400 1-0.400 1.400 0l1.400 1.400c0.400 0.400 0.400 1 0 1.400l-1 1l-2.800-2.800zM6.900 2.300l2.800 2.800l-6.200 6.200h-2.800v-2.800z"/></svg></a><a class="xb ico x-dan" style="margin-right:0"><svg class="ic" width="10.083333333333334" height="11" viewBox="0 0 11 12" style=""><path fill="currentColor" fill-rule="evenodd" d="M3.800 0.200h3.400l0.600 1.300h2.700v1.100h-10v-1.100h2.700zM1.300 3.200h8.400v7.500c0 0.700-0.500 1.200-1.200 1.200h-6c-0.700 0-1.200-0.500-1.200-1.200zM3.200 4.600v5.600h0.900v-5.600zM5.050 4.600v5.600h0.900v-5.600zM6.900 4.600v5.600h0.900v-5.600z"/></svg></a></td></tr>
<tr class="odd"><td style="padding:0 0 0 15px;text-align:left"><a class="xb x-info"><svg class="ic" width="12" height="12" viewBox="0 0 12 12" style=""><path fill="currentColor" d="M8.300 2l1.900 1.900l-8.100 8.100l-1.900-1.900zM2.700 0.200l0.400 1.200l1.200 0.400l-1.200 0.400l-0.400 1.200l-0.400-1.200l-1.200-0.400l1.200-0.400zM6 0l0.300 0.800l0.800 0.300l-0.800 0.300l-0.300 0.800l-0.300-0.800l-0.800-0.300l0.800-0.300zM10.800 0.200l0.300 0.900l0.900 0.300l-0.900 0.300l-0.300 0.900l-0.300-0.900l-0.900-0.300l0.900-0.300zM10.800 4.900l0.300 0.900l0.900 0.300l-0.900 0.300l-0.300 0.900l-0.300-0.900l-0.900-0.300l0.900-0.300z"/></svg>更新余额</a><a class="xb x-warn"><svg class="ic" width="12" height="10" viewBox="0 0 12 10" style=""><path fill="none" stroke="currentColor" stroke-width="1.200" d="M0.600 1.400c0-0.400 0.300-0.800 0.800-0.800h2.800c0.400 0 0.800 0.400 0.800 0.800v0.500h5.600c0.400 0 0.800 0.400 0.800 0.800v5.900c0 0.400-0.400 0.800-0.800 0.800h-9.200c-0.400 0-0.800-0.400-0.800-0.800z"/></svg>是否同步</a><a class="xb x-info"><svg class="ic" width="12" height="12" viewBox="0 0 12 12" style=""><path fill="currentColor" d="M8.300 2l1.900 1.900l-8.100 8.100l-1.900-1.900zM2.700 0.200l0.400 1.200l1.200 0.400l-1.200 0.400l-0.400 1.200l-0.400-1.200l-1.200-0.400l1.200-0.400zM6 0l0.300 0.800l0.800 0.300l-0.800 0.300l-0.300 0.800l-0.300-0.800l-0.800-0.300l0.800-0.300zM10.800 0.200l0.300 0.900l0.900 0.300l-0.900 0.300l-0.300 0.900l-0.300-0.900l-0.900-0.300l0.900-0.300zM10.800 4.900l0.300 0.900l0.900 0.300l-0.900 0.300l-0.300 0.900l-0.300-0.900l-0.900-0.300l0.900-0.300z"/></svg>提现</a><a class="xb ico x-suc"><svg class="ic" width="12" height="12" viewBox="0 0 12 12" style=""><path fill="currentColor" d="M8.700 0.500c0.400-0.400 1-0.400 1.400 0l1.400 1.400c0.400 0.400 0.400 1 0 1.400l-1 1l-2.800-2.800zM6.900 2.300l2.800 2.800l-6.200 6.200h-2.800v-2.800z"/></svg></a><a class="xb ico x-dan" style="margin-right:0"><svg class="ic" width="10.083333333333334" height="11" viewBox="0 0 11 12" style=""><path fill="currentColor" fill-rule="evenodd" d="M3.800 0.200h3.400l0.600 1.300h2.700v1.100h-10v-1.100h2.700zM1.300 3.200h8.400v7.500c0 0.700-0.500 1.200-1.200 1.200h-6c-0.700 0-1.200-0.500-1.200-1.200zM3.200 4.600v5.600h0.900v-5.600zM5.050 4.600v5.600h0.900v-5.600zM6.900 4.600v5.600h0.900v-5.600z"/></svg></a></td></tr>
<tr class="even"><td style="padding:0 0 0 15px;text-align:left"><a class="xb x-info"><svg class="ic" width="12" height="12" viewBox="0 0 12 12" style=""><path fill="currentColor" d="M8.300 2l1.900 1.900l-8.100 8.100l-1.900-1.900zM2.700 0.200l0.400 1.200l1.200 0.400l-1.200 0.400l-0.400 1.200l-0.400-1.200l-1.200-0.400l1.200-0.400zM6 0l0.300 0.800l0.800 0.300l-0.800 0.300l-0.300 0.800l-0.300-0.800l-0.800-0.300l0.800-0.300zM10.800 0.200l0.300 0.900l0.900 0.300l-0.900 0.300l-0.300 0.900l-0.300-0.900l-0.900-0.300l0.900-0.300zM10.800 4.900l0.300 0.900l0.900 0.300l-0.900 0.300l-0.300 0.900l-0.300-0.900l-0.900-0.300l0.900-0.300z"/></svg>更新余额</a><a class="xb x-warn"><svg class="ic" width="12" height="10" viewBox="0 0 12 10" style=""><path fill="none" stroke="currentColor" stroke-width="1.200" d="M0.600 1.400c0-0.400 0.300-0.800 0.800-0.800h2.800c0.400 0 0.800 0.400 0.800 0.800v0.500h5.600c0.400 0 0.800 0.400 0.800 0.800v5.900c0 0.400-0.400 0.800-0.800 0.800h-9.200c-0.400 0-0.800-0.400-0.800-0.800z"/></svg>是否同步</a><a class="xb x-info"><svg class="ic" width="12" height="12" viewBox="0 0 12 12" style=""><path fill="currentColor" d="M8.300 2l1.900 1.900l-8.100 8.100l-1.900-1.900zM2.700 0.200l0.400 1.200l1.200 0.400l-1.200 0.400l-0.400 1.200l-0.400-1.200l-1.200-0.400l1.200-0.400zM6 0l0.300 0.800l0.800 0.300l-0.800 0.300l-0.300 0.800l-0.300-0.800l-0.800-0.300l0.800-0.300zM10.800 0.200l0.300 0.900l0.900 0.300l-0.900 0.300l-0.300 0.900l-0.300-0.900l-0.900-0.300l0.900-0.300zM10.800 4.900l0.300 0.900l0.900 0.300l-0.900 0.300l-0.300 0.900l-0.300-0.900l-0.900-0.300l0.900-0.300z"/></svg>提现</a><a class="xb ico x-suc"><svg class="ic" width="12" height="12" viewBox="0 0 12 12" style=""><path fill="currentColor" d="M8.700 0.500c0.400-0.400 1-0.400 1.400 0l1.400 1.400c0.400 0.400 0.400 1 0 1.400l-1 1l-2.800-2.800zM6.900 2.300l2.800 2.800l-6.200 6.200h-2.800v-2.800z"/></svg></a><a class="xb ico x-dan" style="margin-right:0"><svg class="ic" width="10.083333333333334" height="11" viewBox="0 0 11 12" style=""><path fill="currentColor" fill-rule="evenodd" d="M3.800 0.200h3.400l0.600 1.300h2.700v1.100h-10v-1.100h2.700zM1.300 3.200h8.400v7.500c0 0.700-0.500 1.200-1.200 1.200h-6c-0.700 0-1.200-0.500-1.200-1.200zM3.200 4.600v5.600h0.900v-5.600zM5.050 4.600v5.600h0.900v-5.600zM6.900 4.600v5.600h0.900v-5.600z"/></svg></a></td></tr>
<tr class="odd"><td style="padding:0 0 0 15px;text-align:left"><a class="xb x-info"><svg class="ic" width="12" height="12" viewBox="0 0 12 12" style=""><path fill="currentColor" d="M8.300 2l1.900 1.900l-8.100 8.100l-1.900-1.900zM2.700 0.200l0.400 1.200l1.200 0.400l-1.200 0.400l-0.400 1.200l-0.400-1.200l-1.200-0.400l1.200-0.400zM6 0l0.300 0.800l0.800 0.300l-0.800 0.300l-0.300 0.800l-0.300-0.800l-0.800-0.300l0.800-0.300zM10.800 0.200l0.300 0.900l0.900 0.300l-0.900 0.300l-0.300 0.900l-0.300-0.900l-0.900-0.300l0.900-0.300zM10.800 4.900l0.300 0.900l0.900 0.300l-0.900 0.300l-0.300 0.900l-0.300-0.900l-0.900-0.300l0.900-0.300z"/></svg>更新余额</a><a class="xb x-warn"><svg class="ic" width="12" height="10" viewBox="0 0 12 10" style=""><path fill="none" stroke="currentColor" stroke-width="1.200" d="M0.600 1.400c0-0.400 0.300-0.800 0.800-0.800h2.800c0.400 0 0.800 0.400 0.800 0.800v0.500h5.600c0.400 0 0.800 0.400 0.800 0.800v5.900c0 0.400-0.400 0.800-0.800 0.800h-9.200c-0.400 0-0.800-0.400-0.800-0.800z"/></svg>是否同步</a><a class="xb x-info"><svg class="ic" width="12" height="12" viewBox="0 0 12 12" style=""><path fill="currentColor" d="M8.300 2l1.900 1.900l-8.100 8.100l-1.900-1.900zM2.700 0.200l0.400 1.200l1.200 0.400l-1.200 0.400l-0.400 1.200l-0.400-1.200l-1.200-0.400l1.200-0.400zM6 0l0.300 0.800l0.800 0.300l-0.800 0.300l-0.300 0.800l-0.300-0.800l-0.800-0.300l0.800-0.300zM10.800 0.200l0.300 0.900l0.900 0.300l-0.900 0.300l-0.300 0.900l-0.300-0.900l-0.900-0.300l0.900-0.300zM10.800 4.900l0.300 0.900l0.900 0.300l-0.900 0.300l-0.300 0.900l-0.300-0.900l-0.900-0.300l0.900-0.300z"/></svg>提现</a><a class="xb ico x-suc"><svg class="ic" width="12" height="12" viewBox="0 0 12 12" style=""><path fill="currentColor" d="M8.700 0.500c0.400-0.400 1-0.400 1.400 0l1.400 1.400c0.400 0.400 0.400 1 0 1.400l-1 1l-2.800-2.800zM6.900 2.300l2.800 2.800l-6.200 6.200h-2.800v-2.800z"/></svg></a><a class="xb ico x-dan" style="margin-right:0"><svg class="ic" width="10.083333333333334" height="11" viewBox="0 0 11 12" style=""><path fill="currentColor" fill-rule="evenodd" d="M3.800 0.200h3.400l0.600 1.300h2.700v1.100h-10v-1.100h2.700zM1.300 3.200h8.400v7.500c0 0.700-0.500 1.200-1.200 1.200h-6c-0.700 0-1.200-0.500-1.200-1.200zM3.200 4.600v5.600h0.900v-5.600zM5.050 4.600v5.600h0.900v-5.600zM6.900 4.600v5.600h0.900v-5.600z"/></svg></a></td></tr>
<tr class="even"><td style="padding:0 0 0 15px;text-align:left"><a class="xb x-info"><svg class="ic" width="12" height="12" viewBox="0 0 12 12" style=""><path fill="currentColor" d="M8.300 2l1.900 1.900l-8.100 8.100l-1.900-1.900zM2.700 0.200l0.400 1.200l1.200 0.400l-1.200 0.400l-0.400 1.200l-0.400-1.200l-1.200-0.400l1.200-0.400zM6 0l0.300 0.800l0.800 0.300l-0.800 0.300l-0.300 0.800l-0.300-0.800l-0.800-0.300l0.800-0.300zM10.800 0.200l0.300 0.900l0.900 0.300l-0.900 0.300l-0.300 0.900l-0.300-0.900l-0.900-0.300l0.900-0.300zM10.800 4.900l0.300 0.900l0.900 0.300l-0.900 0.300l-0.300 0.900l-0.300-0.900l-0.900-0.300l0.900-0.300z"/></svg>更新余额</a><a class="xb x-warn"><svg class="ic" width="12" height="10" viewBox="0 0 12 10" style=""><path fill="none" stroke="currentColor" stroke-width="1.200" d="M0.600 1.400c0-0.400 0.300-0.800 0.800-0.800h2.800c0.400 0 0.800 0.400 0.800 0.800v0.500h5.600c0.400 0 0.800 0.400 0.800 0.800v5.900c0 0.400-0.400 0.800-0.800 0.800h-9.200c-0.400 0-0.800-0.400-0.800-0.800z"/></svg>是否同步</a><a class="xb x-info"><svg class="ic" width="12" height="12" viewBox="0 0 12 12" style=""><path fill="currentColor" d="M8.300 2l1.900 1.900l-8.100 8.100l-1.900-1.900zM2.700 0.200l0.400 1.200l1.200 0.400l-1.200 0.400l-0.400 1.200l-0.400-1.200l-1.200-0.400l1.200-0.400zM6 0l0.300 0.800l0.800 0.300l-0.800 0.300l-0.300 0.800l-0.300-0.800l-0.800-0.300l0.800-0.300zM10.800 0.200l0.300 0.900l0.900 0.300l-0.900 0.300l-0.300 0.900l-0.300-0.900l-0.900-0.300l0.900-0.300zM10.800 4.900l0.300 0.900l0.900 0.300l-0.900 0.300l-0.300 0.900l-0.300-0.900l-0.900-0.300l0.900-0.300z"/></svg>提现</a><a class="xb ico x-suc"><svg class="ic" width="12" height="12" viewBox="0 0 12 12" style=""><path fill="currentColor" d="M8.700 0.500c0.400-0.400 1-0.400 1.400 0l1.400 1.400c0.400 0.400 0.400 1 0 1.400l-1 1l-2.800-2.800zM6.900 2.300l2.800 2.800l-6.200 6.200h-2.800v-2.800z"/></svg></a><a class="xb ico x-dan" style="margin-right:0"><svg class="ic" width="10.083333333333334" height="11" viewBox="0 0 11 12" style=""><path fill="currentColor" fill-rule="evenodd" d="M3.800 0.200h3.400l0.600 1.300h2.700v1.100h-10v-1.100h2.700zM1.300 3.200h8.400v7.500c0 0.700-0.500 1.200-1.200 1.200h-6c-0.700 0-1.200-0.500-1.200-1.200zM3.200 4.600v5.600h0.900v-5.600zM5.050 4.600v5.600h0.900v-5.600zM6.900 4.600v5.600h0.900v-5.600z"/></svg></a></td></tr>
<tr class="odd"><td style="padding:0 0 0 15px;text-align:left"><a class="xb x-info"><svg class="ic" width="12" height="12" viewBox="0 0 12 12" style=""><path fill="currentColor" d="M8.300 2l1.900 1.900l-8.100 8.100l-1.900-1.900zM2.700 0.200l0.400 1.200l1.200 0.400l-1.200 0.400l-0.400 1.200l-0.400-1.200l-1.200-0.400l1.200-0.400zM6 0l0.300 0.800l0.800 0.300l-0.800 0.300l-0.300 0.800l-0.300-0.800l-0.800-0.300l0.800-0.300zM10.800 0.200l0.300 0.900l0.900 0.300l-0.900 0.300l-0.300 0.900l-0.300-0.900l-0.900-0.300l0.900-0.300zM10.800 4.900l0.300 0.900l0.900 0.300l-0.900 0.300l-0.300 0.900l-0.300-0.900l-0.900-0.300l0.900-0.300z"/></svg>更新余额</a><a class="xb x-warn"><svg class="ic" width="12" height="10" viewBox="0 0 12 10" style=""><path fill="none" stroke="currentColor" stroke-width="1.200" d="M0.600 1.400c0-0.400 0.300-0.800 0.800-0.800h2.800c0.400 0 0.800 0.400 0.800 0.800v0.500h5.600c0.400 0 0.800 0.400 0.800 0.800v5.900c0 0.400-0.400 0.800-0.800 0.800h-9.200c-0.400 0-0.800-0.400-0.800-0.800z"/></svg>是否同步</a><a class="xb x-info"><svg class="ic" width="12" height="12" viewBox="0 0 12 12" style=""><path fill="currentColor" d="M8.300 2l1.900 1.900l-8.100 8.100l-1.900-1.900zM2.700 0.200l0.400 1.200l1.200 0.400l-1.200 0.400l-0.400 1.200l-0.400-1.200l-1.200-0.400l1.200-0.400zM6 0l0.300 0.800l0.800 0.300l-0.800 0.300l-0.300 0.800l-0.300-0.800l-0.800-0.300l0.800-0.300zM10.800 0.200l0.300 0.900l0.900 0.300l-0.900 0.300l-0.300 0.900l-0.300-0.900l-0.900-0.300l0.900-0.300zM10.800 4.900l0.300 0.900l0.900 0.300l-0.900 0.300l-0.300 0.900l-0.300-0.900l-0.900-0.300l0.900-0.300z"/></svg>提现</a><a class="xb ico x-suc"><svg class="ic" width="12" height="12" viewBox="0 0 12 12" style=""><path fill="currentColor" d="M8.700 0.500c0.400-0.400 1-0.400 1.400 0l1.400 1.400c0.400 0.400 0.400 1 0 1.400l-1 1l-2.800-2.800zM6.900 2.300l2.800 2.800l-6.200 6.200h-2.800v-2.800z"/></svg></a><a class="xb ico x-dan" style="margin-right:0"><svg class="ic" width="10.083333333333334" height="11" viewBox="0 0 11 12" style=""><path fill="currentColor" fill-rule="evenodd" d="M3.800 0.200h3.400l0.600 1.300h2.700v1.100h-10v-1.100h2.700zM1.300 3.200h8.400v7.500c0 0.700-0.500 1.200-1.200 1.200h-6c-0.700 0-1.200-0.500-1.200-1.200zM3.200 4.600v5.600h0.900v-5.600zM5.050 4.600v5.600h0.900v-5.600zM6.900 4.600v5.600h0.900v-5.600z"/></svg></a></td></tr>
<tr class="even"><td style="padding:0 0 0 15px;text-align:left"><a class="xb x-info"><svg class="ic" width="12" height="12" viewBox="0 0 12 12" style=""><path fill="currentColor" d="M8.300 2l1.900 1.900l-8.100 8.100l-1.900-1.900zM2.700 0.200l0.400 1.200l1.200 0.400l-1.200 0.400l-0.400 1.200l-0.400-1.200l-1.200-0.400l1.200-0.400zM6 0l0.300 0.800l0.800 0.300l-0.800 0.300l-0.300 0.800l-0.300-0.800l-0.800-0.300l0.800-0.300zM10.800 0.200l0.300 0.900l0.900 0.300l-0.900 0.300l-0.300 0.900l-0.300-0.900l-0.900-0.300l0.900-0.300zM10.800 4.900l0.300 0.900l0.900 0.300l-0.900 0.300l-0.300 0.900l-0.300-0.900l-0.900-0.300l0.900-0.300z"/></svg>更新余额</a><a class="xb x-warn"><svg class="ic" width="12" height="10" viewBox="0 0 12 10" style=""><path fill="none" stroke="currentColor" stroke-width="1.200" d="M0.600 1.400c0-0.400 0.300-0.800 0.800-0.800h2.800c0.400 0 0.800 0.400 0.800 0.800v0.500h5.600c0.400 0 0.800 0.400 0.800 0.800v5.900c0 0.400-0.400 0.800-0.800 0.800h-9.200c-0.400 0-0.800-0.400-0.800-0.800z"/></svg>是否同步</a><a class="xb x-info"><svg class="ic" width="12" height="12" viewBox="0 0 12 12" style=""><path fill="currentColor" d="M8.300 2l1.900 1.900l-8.100 8.100l-1.900-1.900zM2.700 0.200l0.400 1.200l1.200 0.400l-1.200 0.400l-0.400 1.200l-0.400-1.200l-1.200-0.400l1.200-0.400zM6 0l0.300 0.800l0.800 0.300l-0.800 0.300l-0.300 0.800l-0.300-0.800l-0.800-0.300l0.800-0.300zM10.800 0.200l0.300 0.900l0.900 0.300l-0.900 0.300l-0.300 0.900l-0.300-0.900l-0.900-0.300l0.900-0.300zM10.800 4.900l0.300 0.900l0.900 0.300l-0.900 0.300l-0.300 0.900l-0.300-0.900l-0.900-0.300l0.900-0.300z"/></svg>提现</a><a class="xb ico x-suc"><svg class="ic" width="12" height="12" viewBox="0 0 12 12" style=""><path fill="currentColor" d="M8.700 0.500c0.400-0.400 1-0.400 1.400 0l1.400 1.400c0.400 0.400 0.400 1 0 1.400l-1 1l-2.800-2.800zM6.900 2.300l2.800 2.800l-6.200 6.200h-2.800v-2.800z"/></svg></a><a class="xb ico x-dan" style="margin-right:0"><svg class="ic" width="10.083333333333334" height="11" viewBox="0 0 11 12" style=""><path fill="currentColor" fill-rule="evenodd" d="M3.800 0.200h3.400l0.600 1.300h2.700v1.100h-10v-1.100h2.700zM1.300 3.200h8.400v7.500c0 0.700-0.500 1.200-1.200 1.200h-6c-0.700 0-1.200-0.500-1.200-1.200zM3.200 4.600v5.600h0.900v-5.600zM5.050 4.600v5.600h0.900v-5.600zM6.900 4.600v5.600h0.900v-5.600z"/></svg></a></td></tr>
<tr class="odd"><td style="padding:0 0 0 15px;text-align:left"><a class="xb x-info"><svg class="ic" width="12" height="12" viewBox="0 0 12 12" style=""><path fill="currentColor" d="M8.300 2l1.900 1.900l-8.100 8.100l-1.900-1.900zM2.700 0.200l0.400 1.200l1.200 0.400l-1.200 0.400l-0.400 1.200l-0.400-1.200l-1.200-0.400l1.200-0.400zM6 0l0.300 0.800l0.800 0.300l-0.800 0.300l-0.300 0.800l-0.300-0.800l-0.800-0.300l0.800-0.300zM10.800 0.200l0.300 0.900l0.900 0.300l-0.900 0.300l-0.300 0.900l-0.300-0.900l-0.900-0.300l0.900-0.300zM10.800 4.900l0.300 0.900l0.900 0.300l-0.900 0.300l-0.300 0.900l-0.300-0.900l-0.900-0.300l0.900-0.300z"/></svg>更新余额</a><a class="xb x-warn"><svg class="ic" width="12" height="10" viewBox="0 0 12 10" style=""><path fill="none" stroke="currentColor" stroke-width="1.200" d="M0.600 1.400c0-0.400 0.300-0.800 0.800-0.800h2.800c0.400 0 0.800 0.400 0.800 0.800v0.500h5.600c0.400 0 0.800 0.400 0.800 0.800v5.900c0 0.400-0.400 0.800-0.800 0.800h-9.200c-0.400 0-0.800-0.400-0.800-0.800z"/></svg>是否同步</a><a class="xb x-info"><svg class="ic" width="12" height="12" viewBox="0 0 12 12" style=""><path fill="currentColor" d="M8.300 2l1.900 1.900l-8.100 8.100l-1.900-1.900zM2.700 0.200l0.400 1.200l1.200 0.400l-1.200 0.400l-0.400 1.200l-0.400-1.200l-1.200-0.400l1.200-0.400zM6 0l0.300 0.800l0.800 0.300l-0.800 0.300l-0.300 0.800l-0.300-0.800l-0.800-0.300l0.800-0.300zM10.800 0.200l0.300 0.900l0.900 0.300l-0.900 0.300l-0.300 0.900l-0.300-0.900l-0.900-0.300l0.900-0.300zM10.800 4.900l0.300 0.900l0.900 0.300l-0.900 0.300l-0.300 0.900l-0.300-0.900l-0.900-0.300l0.900-0.300z"/></svg>提现</a><a class="xb ico x-suc"><svg class="ic" width="12" height="12" viewBox="0 0 12 12" style=""><path fill="currentColor" d="M8.700 0.500c0.400-0.400 1-0.400 1.400 0l1.400 1.400c0.400 0.400 0.400 1 0 1.400l-1 1l-2.800-2.800zM6.900 2.300l2.800 2.800l-6.200 6.200h-2.800v-2.800z"/></svg></a><a class="xb ico x-dan" style="margin-right:0"><svg class="ic" width="10.083333333333334" height="11" viewBox="0 0 11 12" style=""><path fill="currentColor" fill-rule="evenodd" d="M3.800 0.200h3.400l0.600 1.300h2.700v1.100h-10v-1.100h2.700zM1.300 3.200h8.400v7.500c0 0.700-0.500 1.200-1.200 1.200h-6c-0.700 0-1.200-0.500-1.200-1.200zM3.200 4.600v5.600h0.900v-5.600zM5.050 4.600v5.600h0.900v-5.600zM6.900 4.600v5.600h0.900v-5.600z"/></svg></a></td></tr>
<tr class="even"><td style="padding:0 0 0 15px;text-align:left"><a class="xb x-info"><svg class="ic" width="12" height="12" viewBox="0 0 12 12" style=""><path fill="currentColor" d="M8.300 2l1.900 1.900l-8.100 8.100l-1.900-1.900zM2.700 0.200l0.400 1.200l1.200 0.400l-1.200 0.400l-0.400 1.200l-0.400-1.200l-1.200-0.400l1.200-0.400zM6 0l0.300 0.800l0.800 0.300l-0.800 0.300l-0.300 0.800l-0.300-0.800l-0.800-0.300l0.800-0.300zM10.800 0.200l0.300 0.900l0.900 0.300l-0.900 0.300l-0.300 0.900l-0.300-0.900l-0.900-0.300l0.900-0.300zM10.800 4.900l0.300 0.900l0.900 0.300l-0.900 0.300l-0.300 0.900l-0.300-0.900l-0.900-0.300l0.900-0.300z"/></svg>更新余额</a><a class="xb x-warn"><svg class="ic" width="12" height="10" viewBox="0 0 12 10" style=""><path fill="none" stroke="currentColor" stroke-width="1.200" d="M0.600 1.400c0-0.400 0.300-0.800 0.800-0.800h2.800c0.400 0 0.800 0.400 0.800 0.800v0.500h5.600c0.400 0 0.800 0.400 0.800 0.800v5.900c0 0.400-0.400 0.800-0.800 0.800h-9.200c-0.400 0-0.800-0.400-0.800-0.800z"/></svg>是否同步</a><a class="xb x-info"><svg class="ic" width="12" height="12" viewBox="0 0 12 12" style=""><path fill="currentColor" d="M8.300 2l1.900 1.900l-8.100 8.100l-1.900-1.900zM2.700 0.200l0.400 1.200l1.200 0.400l-1.200 0.400l-0.400 1.200l-0.400-1.200l-1.200-0.400l1.200-0.400zM6 0l0.300 0.800l0.800 0.300l-0.800 0.300l-0.300 0.800l-0.300-0.800l-0.800-0.300l0.800-0.300zM10.800 0.200l0.300 0.900l0.900 0.300l-0.900 0.300l-0.300 0.900l-0.300-0.900l-0.900-0.300l0.900-0.300zM10.800 4.900l0.300 0.900l0.900 0.300l-0.900 0.300l-0.300 0.900l-0.300-0.900l-0.900-0.300l0.900-0.300z"/></svg>提现</a><a class="xb ico x-suc"><svg class="ic" width="12" height="12" viewBox="0 0 12 12" style=""><path fill="currentColor" d="M8.700 0.500c0.400-0.400 1-0.400 1.400 0l1.400 1.400c0.400 0.400 0.400 1 0 1.400l-1 1l-2.800-2.800zM6.900 2.300l2.800 2.800l-6.200 6.200h-2.800v-2.800z"/></svg></a><a class="xb ico x-dan" style="margin-right:0"><svg class="ic" width="10.083333333333334" height="11" viewBox="0 0 11 12" style=""><path fill="currentColor" fill-rule="evenodd" d="M3.800 0.200h3.400l0.600 1.300h2.700v1.100h-10v-1.100h2.700zM1.300 3.200h8.400v7.500c0 0.700-0.500 1.200-1.200 1.200h-6c-0.700 0-1.200-0.500-1.200-1.200zM3.200 4.600v5.600h0.900v-5.600zM5.050 4.600v5.600h0.900v-5.600zM6.900 4.600v5.600h0.900v-5.600z"/></svg></a></td></tr>
</tbody></table></div>
<div class="sbar"><div class="thumb"></div><svg width="6" height="8" viewBox="0 0 6 8" style="position:absolute;left:4px;top:5px"><path fill="#a3a3a3" d="M6 0v8l-5-4z"/></svg><svg width="6" height="8" viewBox="0 0 6 8" style="position:absolute;right:5px;top:5px"><path fill="#505050" d="M0 0v8l5-4z"/></svg></div>
<div class="pinfo">显示第 1 到第 10 条记录，总共 42 条记录 每页显示</div>
<div class="pg" style="left:583px;top:819px;width:52px;height:33px;line-height:31px;font-size:13px;border-radius:3px;background:#f4f4f4;color:#444">10 <span style="line-height:0;position:relative;top:-1px"><svg class="ic" width="8" height="4" viewBox="0 0 8 4" style=""><path fill="currentColor" d="M0 4h8l-4-4z"/></svg></span></div>
<div class="pinfo" style="left:639px">条记录</div>
<div class="pg" style="left:1479px;width:68px;border-radius:3px 0 0 3px;">上一页</div><div class="pg" style="left:1546px;width:35px;background:#444c69;border-color:#444c69;color:#fff;">1</div><div class="pg" style="left:1580px;width:33px;">2</div><div class="pg" style="left:1612px;width:34px;">3</div><div class="pg" style="left:1645px;width:34px;">4</div><div class="pg" style="left:1678px;width:34px;">5</div><div class="pg" style="left:1711px;width:67px;border-radius:0 3px 3px 0;">下一页</div>
<div class="pg" style="left:1783px;width:50px;height:33px;background:#fff;border-color:#d2d6de"></div><div class="pg" style="left:1838px;top:818px;height:33px;line-height:30px;font-size:13px;width:52px;border-radius:3px;background:#f4f4f4;color:#444">跳转</div>
<svg width="300" height="300" viewBox="-150 -150 300 300" style="position:absolute;left:316px;top:265px;z-index:20">
<circle cx="-0.1" cy="0.7" r="139.800" fill="none" stroke="#ff0000" stroke-width="5.700"/>
<text font-family="'Liberation Sans',sans-serif" font-size="24" fill="#ff0000" stroke="#ff0000" stroke-width="1.100" x="-101.4 -107.5 -107.7 -99.9 -89.7 -73.2 -49.2 -31.4 -4.6 24.5 45.2 63.8 86.2 97.9 105.8 108.5" y="38.8 14.3 -11 -40.5 -59.8 -79 -95.5 -103 -107.4 -104.5 -97.6 -87 -64.5 -45.2 -21.9 -0.1" rotate="-106 -92.6 -79.2 -65.8 -52.4 -39 -25.7 -12.3 1.1 14.5 27.9 41.3 54.7 68.1 81.5 94.9">www.haiwaiym.com</text>
<text x="2.500" y="14.500" text-anchor="middle" font-family="'Noto Serif CJK SC','Liberation Serif',serif" font-weight="bold" font-size="37" fill="#ff0000" letter-spacing="5">海外源码</text>
<text transform="scale(0.92,1)" font-family="'Liberation Sans',sans-serif" font-weight="bold" font-size="28" fill="#ff0000" y="80.500" x="-109.7 -92.8 -68.6 -53.5 -35 -12.5 -1.3 14.9 39.8 48.9 56 74 89.6">haiwaiym. com</text>
<text font-family="'Liberation Sans',sans-serif" font-size="12" font-style="italic" fill="#ff0000" x="-81.7 -69.5 -54.5 -43.4 -28.1 -11.3 2.1 15 33 46.1 59.5 71.1" y="102.9 111.6 119.6 124.2 128.5 131 131.5 130.7 127.3 123.2 117.2 110.6" rotate="37.2 30.6 24.1 17.5 10.9 4.4 -2.2 -8.8 -15.4 -21.9 -28.5 -35.1">haiwaiym.com</text>
</svg>
<div class="topline"></div>
</body></html>
